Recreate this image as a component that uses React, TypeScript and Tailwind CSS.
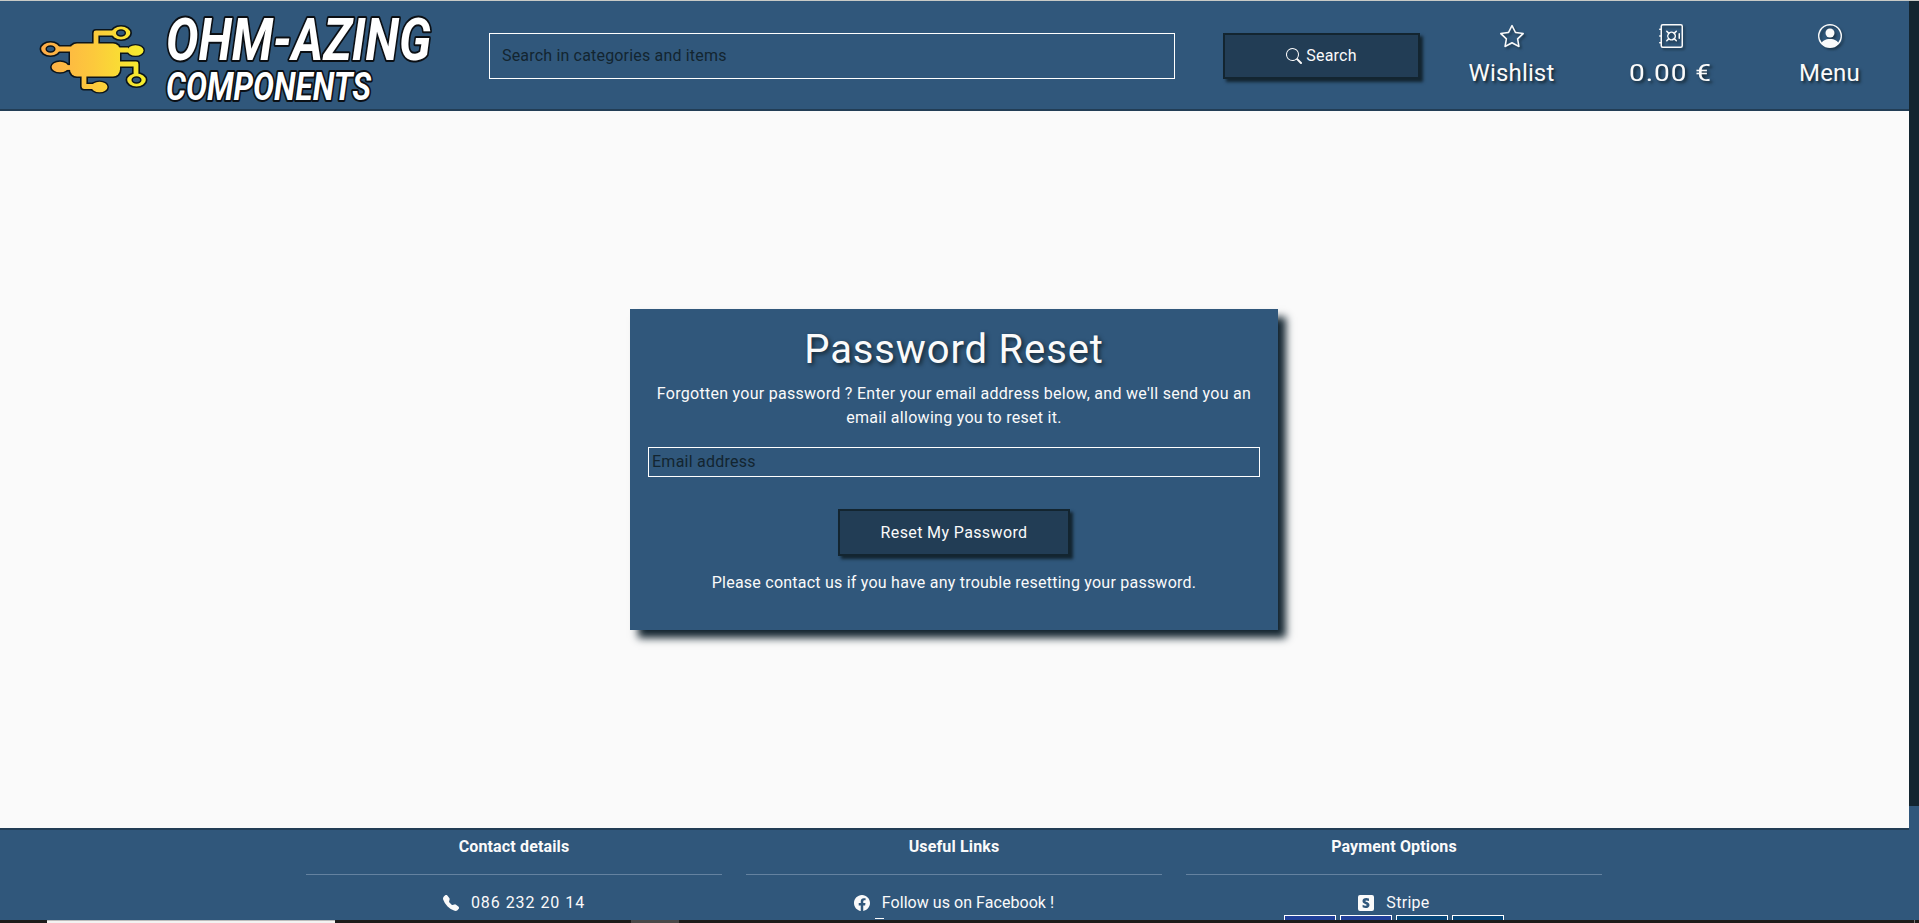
import { ReactNode } from "react";
import { BsSearch, BsStar, BsSafe, BsPersonCircle, BsTelephoneFill, BsFacebook, BsStripe } from "react-icons/bs";

function Logo() {
  return (
    <svg className="block h-[108px] w-[460px] shrink-0 overflow-visible" viewBox="0 1 460 108">
      <defs>
        <linearGradient id="gold" gradientUnits="userSpaceOnUse" x1="40" y1="0" x2="147" y2="0">
          <stop offset="0" stopColor="#ffab48" />
          <stop offset="0.5" stopColor="#fcc93c" />
          <stop offset="1" stopColor="#f6f02c" />
        </linearGradient>
      </defs>
      <g fill="none" stroke="#0b141b" strokeWidth="8" strokeLinejoin="round">
        <path d="M56 49H74M96 48V33H116M116 50H128M116 64H136V76M84 74V86.500H96" />
      </g>
      <g fill="#0b141b">
        <ellipse cx="50.500" cy="49" rx="11" ry="8" />
        <ellipse cx="60" cy="67" rx="10" ry="6.800" />
        <ellipse cx="121" cy="33" rx="11" ry="8" />
        <ellipse cx="135.500" cy="50.500" rx="9.500" ry="6.600" />
        <ellipse cx="136.500" cy="80" rx="11" ry="8" />
        <ellipse cx="99.500" cy="87" rx="9.500" ry="6.600" />
        <rect x="68.500" y="42" width="53" height="36" rx="8" />
        <rect x="62" y="63.500" width="12" height="8" />
      </g>
      <g fill="none" stroke="url(#gold)" strokeWidth="4.800" strokeLinejoin="round">
        <path d="M56 49H74M96 48V33H116M116 50.010H128M116 64H136V76M84 74V86.500H96" />
        <path d="M62 67.500H74" stroke="#fdb943" />
      </g>
      <g fill="url(#gold)">
        <ellipse cx="50.500" cy="49" rx="9.300" ry="6.500" />
        <ellipse cx="60" cy="67" rx="8.400" ry="5.300" />
        <ellipse cx="121" cy="33" rx="9.300" ry="6.500" />
        <ellipse cx="135.500" cy="50.500" rx="8" ry="5.200" />
        <ellipse cx="136.500" cy="80" rx="9.300" ry="6.500" />
        <ellipse cx="99.500" cy="87" rx="8" ry="5.200" />
        <rect x="70" y="43.500" width="50" height="33" rx="7" />
      </g>
      <g fill="#30577b" stroke="#0b141b" strokeWidth="1.500">
        <ellipse cx="50.500" cy="49" rx="4.300" ry="2.900" />
        <ellipse cx="121" cy="33" rx="4.300" ry="2.900" />
        <ellipse cx="136.500" cy="80" rx="4.300" ry="2.900" />
      </g>
      <g fill="#fff" stroke="#0b0f14" strokeLinejoin="round" paintOrder="stroke" fontFamily="Roboto, sans-serif" fontWeight="700" fontStyle="italic">
        <text x="166" y="60" fontSize="59" strokeWidth="4" textLength="265" lengthAdjust="spacingAndGlyphs">OHM-AZING</text>
        <text x="166" y="99.500" fontSize="38" strokeWidth="4" textLength="205" lengthAdjust="spacingAndGlyphs">COMPONENTS</text>
      </g>
    </svg>
  );
}

function NavItem({ icon, children }: { icon: ReactNode; children: ReactNode }) {
  return (
    <a className="flex w-[159px] shrink-0 flex-col items-center pt-[23px] text-2xl leading-[36px] [text-shadow:2px_2px_3px_#132530]">
      <span className="mb-[7px] text-[24px] drop-shadow-[2px_2px_1px_rgba(19,37,48,0.6)]">{icon}</span>
      {children}
    </a>
  );
}

function FooterColumn({ title, children }: { title: string; children: ReactNode }) {
  return (
    <section className="w-[416px] text-center">
      <h2 className="pt-[5px] text-base leading-6 font-bold tracking-[0.150px]">{title}</h2>
      <hr className="mt-[15px] mb-4 border-[#6482a0]" />
      {children}
    </section>
  );
}

export default function App() {
  return (
    <div className="flex h-[923px] w-[1919px] flex-col overflow-hidden bg-[#30577b] font-['Roboto',sans-serif] text-[#fafafa]">
      <div className="h-px shrink-0 bg-[#c8cac6]" />
      <div className="flex h-[919px] shrink-0 overflow-hidden">
        <div className="w-[1909px]">
          <header className="flex h-[110px] border-b-2 border-[#223d55]">
            <Logo />
            <input
              className="mt-8 ml-[29px] h-[46px] w-[686px] shrink-0 border border-white bg-transparent px-3 pb-[2px] text-base tracking-[0.180px] outline-none placeholder:text-[#132530]"
              placeholder="Search in categories and items"
            />
            <button className="mt-8 ml-12 flex h-[46px] w-[197px] shrink-0 items-center justify-center gap-1 border-2 border-[#132530] bg-[#223d55] text-base shadow-[3px_3px_3px_#132530]">
              <BsSearch /> <span className="tracking-[0.200px]">Search</span>
            </button>
            <nav className="ml-3 flex shrink-0">
              <NavItem icon={<BsStar />}>
                <span className="tracking-[0.150px]">Wishlist</span>
              </NavItem>
              <NavItem icon={<BsSafe />}>
                <span className="inline-block scale-x-[1.170] tracking-[0.800px]">0.00 €</span>
              </NavItem>
              <NavItem icon={<BsPersonCircle />}>
                <span className="tracking-[0.200px]">Menu</span>
              </NavItem>
            </nav>
          </header>
          <main className="flex h-[717px] justify-center bg-[#fafafa] pt-[198px] pr-px">
            <form className="h-[321px] w-[648px] bg-[#30577b] px-[18px] pt-[17px] text-center shadow-[8px_8px_8px_#132530]">
              <h1 className="text-[40px] leading-[48px] tracking-[0.850px] [text-shadow:2px_2px_4px_#132530]">Password Reset</h1>
              <p className="mt-2 text-base leading-6 tracking-[0.280px]">
                Forgotten your password ? Enter your email address below, and we'll send you an
                <br />
                email allowing you to reset it.
              </p>
              <input
                className="mt-[17px] block h-[30px] w-[612px] border border-white bg-transparent px-[3px] pb-[2px] text-base tracking-[0.250px] outline-none placeholder:text-[#132530]"
                placeholder="Email address"
              />
              <button className="mx-auto mt-8 block h-[47px] w-[232px] border-2 border-[#132530] bg-[#223d55] text-base tracking-[0.380px] shadow-[3px_3px_3px_#132530]">
                Reset My Password
              </button>
              <p className="mt-[15px] text-base leading-6 tracking-[0.230px]">
                Please contact us if you have any trouble resetting your password.
              </p>
            </form>
          </main>
          <footer className="flex h-[120px] justify-center gap-6 border-t-2 border-[#223d55] pr-px">
            <FooterColumn title="Contact details">
              <p className="flex items-center justify-center gap-3 leading-6">
                <BsTelephoneFill /> <span className="tracking-[0.950px]">086 232 20 14</span>
              </p>
            </FooterColumn>
            <FooterColumn title="Useful Links">
              <p className="flex items-center justify-center gap-3 leading-6">
                <BsFacebook /> <span className="tracking-[0.050px]">Follow us on Facebook !</span>
              </p>
              <div className="mt-[3px] ml-[129px] h-px w-[9px] bg-[#fafafa]" />
            </FooterColumn>
            <FooterColumn title="Payment Options">
              <p className="flex items-center justify-center gap-3 leading-6">
                <BsStripe /> <span className="tracking-[0.300px]">Stripe</span>
              </p>
              <div className="ml-[98px] flex gap-1">
                <div className="h-8 w-[52px] border border-white bg-[#21409a]" />
                <div className="h-8 w-[52px] border border-white bg-[#21409a]" />
                <div className="h-8 w-[52px] border border-white bg-[#07477a]" />
                <div className="h-8 w-[52px] border border-white bg-[#07477a]" />
              </div>
            </FooterColumn>
          </footer>
        </div>
        <div className="w-[10px] bg-[#30577b]">
          <div className="h-[805px] bg-[#132530]" />
        </div>
      </div>
      <div className="flex h-[3px] shrink-0 bg-[#1d1b1a]">
        <div className="ml-[47px] h-[3px] w-[288px] border-t border-[#bdbdbd] bg-[#f3f2f1]" />
        <div className="ml-[296px] w-12 bg-[#4a4848]" />
        <div className="ml-[1235px] w-px bg-[#777]" />
      </div>
    </div>
  );
}
